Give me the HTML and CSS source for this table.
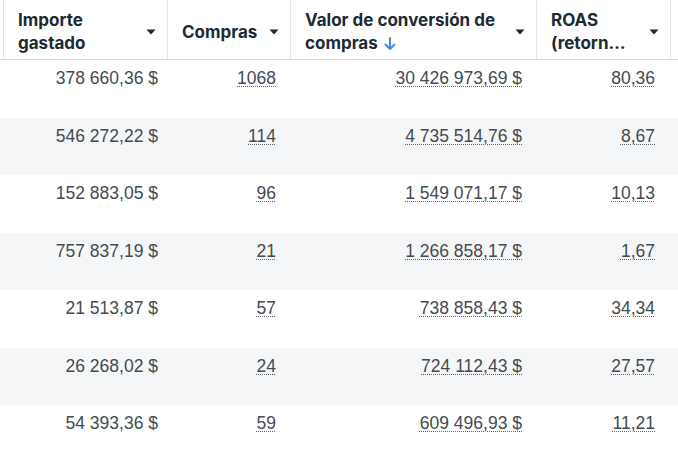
FILE: index.html
```html
<!DOCTYPE html>
<html lang="es">
<head>
<meta charset="utf-8">
<title>Tabla de rendimiento</title>
<link rel="stylesheet" href="styles.css">
</head>
<body>
<div class="table">
  <div class="row head">
    <div class="stub"></div>
    <div class="hcell"><span class="label">Importe gastado</span><svg class="caret" viewBox="0 0 10 6"><path d="M0.5 0.5h9L5 5.5z"/></svg></div>
    <div class="hcell"><span class="label">Compras</span><svg class="caret" viewBox="0 0 10 6"><path d="M0.5 0.5h9L5 5.5z"/></svg></div>
    <div class="hcell"><span class="label">Valor de conversión de compras <svg class="sort" viewBox="0 0 12 14"><path d="M6 1v11M1.5 7.5L6 12l4.5-4.5"/></svg></span><svg class="caret" viewBox="0 0 10 6"><path d="M0.5 0.5h9L5 5.5z"/></svg></div>
    <div class="hcell"><span class="label">ROAS<br>(retorn…</span><svg class="caret" viewBox="0 0 10 6"><path d="M0.5 0.5h9L5 5.5z"/></svg></div>
    <div class="hcell last"></div>
  </div>

  <div class="row">
    <div class="stub"></div>
    <div class="cell c1">378 660,36 $</div>
    <div class="cell c2"><span class="dot">1068</span></div>
    <div class="cell c3"><span class="dot">30 426 973,69 $</span></div>
    <div class="cell c4"><span class="dot">80,36</span></div>
    <div class="cell"></div>
  </div>
  <div class="row alt">
    <div class="stub"></div>
    <div class="cell c1">546 272,22 $</div>
    <div class="cell c2"><span class="dot">114</span></div>
    <div class="cell c3"><span class="dot">4 735 514,76 $</span></div>
    <div class="cell c4"><span class="dot">8,67</span></div>
    <div class="cell"></div>
  </div>
  <div class="row">
    <div class="stub"></div>
    <div class="cell c1">152 883,05 $</div>
    <div class="cell c2"><span class="dot">96</span></div>
    <div class="cell c3"><span class="dot">1 549 071,17 $</span></div>
    <div class="cell c4"><span class="dot">10,13</span></div>
    <div class="cell"></div>
  </div>
  <div class="row alt">
    <div class="stub"></div>
    <div class="cell c1">757 837,19 $</div>
    <div class="cell c2"><span class="dot">21</span></div>
    <div class="cell c3"><span class="dot">1 266 858,17 $</span></div>
    <div class="cell c4"><span class="dot">1,67</span></div>
    <div class="cell"></div>
  </div>
  <div class="row">
    <div class="stub"></div>
    <div class="cell c1">21 513,87 $</div>
    <div class="cell c2"><span class="dot">57</span></div>
    <div class="cell c3"><span class="dot">738 858,43 $</span></div>
    <div class="cell c4"><span class="dot">34,34</span></div>
    <div class="cell"></div>
  </div>
  <div class="row alt">
    <div class="stub"></div>
    <div class="cell c1">26 268,02 $</div>
    <div class="cell c2"><span class="dot">24</span></div>
    <div class="cell c3"><span class="dot">724 112,43 $</span></div>
    <div class="cell c4"><span class="dot">27,57</span></div>
    <div class="cell"></div>
  </div>
  <div class="row">
    <div class="stub"></div>
    <div class="cell c1">54 393,36 $</div>
    <div class="cell c2"><span class="dot">59</span></div>
    <div class="cell c3"><span class="dot">609 496,93 $</span></div>
    <div class="cell c4"><span class="dot">11,21</span></div>
    <div class="cell"></div>
  </div>
</div>
</body>
</html>
```

FILE: styles.css
```css
* { box-sizing: border-box; }

html, body {
  margin: 0;
  padding: 0;
  background: #ffffff;
  overflow: hidden;
}

.table {
  width: 678px;
}

.row {
  display: grid;
  grid-template-columns: 4px 164px 123px 246px 134px 1fr;
  height: 57.5px;
  background: #ffffff;
}

.row.alt {
  background: #f5f6f7;
}

.row.head {
  height: 60px;
  border-bottom: 1px solid #dadde1;
}

.stub {
  border-right: 1px solid #e4e6eb;
}

.row:not(.head) .stub {
  border-right: none;
}

.hcell {
  display: flex;
  align-items: center;
  justify-content: space-between;
  gap: 10px;
  padding: 5px 11px 0 14px;
  border-right: 1px solid #e4e6eb;
  font-family: "Inter", "Liberation Sans", sans-serif;
  font-weight: 700;
  font-size: 17px;
  line-height: 23px;
  color: #1c2b33;
}

.hcell.last {
  border-right: none;
  padding: 0;
}

.label {
  min-width: 0;
}

.caret {
  flex: none;
  width: 10px;
  height: 6px;
  margin-top: -1px;
  fill: #1c2b33;
}

.sort {
  display: inline-block;
  width: 12px;
  height: 14px;
  vertical-align: -2px;
  margin-left: 2px;
  fill: none;
  stroke: #3f8cf0;
  stroke-width: 2;
  stroke-linecap: round;
  stroke-linejoin: round;
}

.cell {
  padding: 8px 14px 0 0;
  text-align: right;
  font-family: "Liberation Sans", "Arial", sans-serif;
  font-size: 17.5px;
  line-height: 20px;
  color: #444b52;
  white-space: nowrap;
}

.cell.c1 {
  padding-right: 10px;
}

.cell.c2 {
  padding-right: 15px;
}

.cell.c3 {
  padding-right: 15px;
}

.cell.c4 {
  padding-right: 16px;
}

.dot {
  text-decoration-line: underline;
  text-decoration-style: dotted;
  text-decoration-color: #5a646d;
  text-decoration-thickness: 1px;
  text-underline-offset: 2px;
}
```
